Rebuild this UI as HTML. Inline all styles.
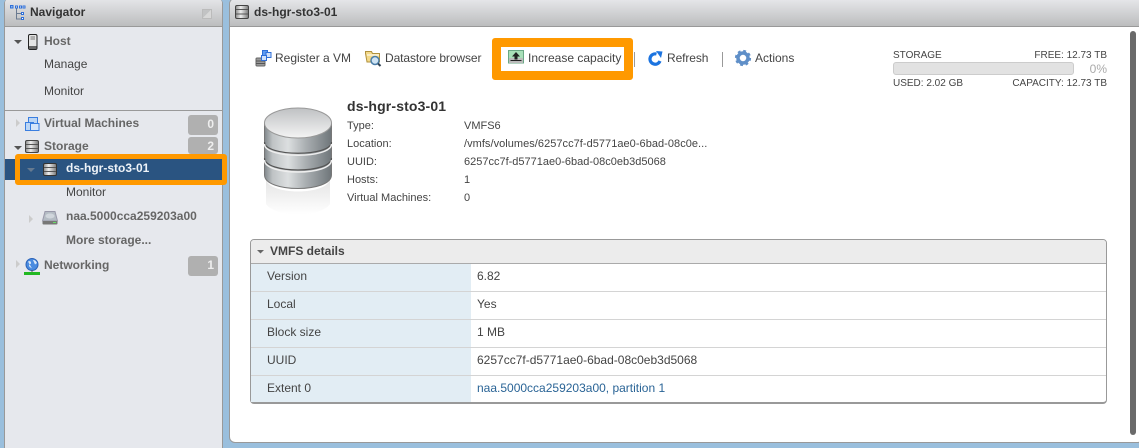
<!DOCTYPE html>
<html><head><meta charset="utf-8"><style>
html,body{margin:0;padding:0}
body{width:1139px;height:444px;overflow:hidden;background:#9abfdd;font:12px "Liberation Sans",sans-serif;color:#444;position:relative}
.a{position:absolute;white-space:nowrap}
svg{position:absolute;overflow:visible}
#left{position:absolute;left:4px;top:-2px;width:219px;height:450px;background:#e6e8ed;border-left:1px solid #999;border-right:1px solid #999;border-radius:6px 6px 0 0;box-sizing:border-box}
.hd{position:absolute;top:0;height:29px;background:linear-gradient(#e6e7ea,#bcbdbe);border-bottom:1px solid #999;box-sizing:border-box}
#main{position:absolute;left:229px;top:-2px;width:915px;height:445px;background:#fff;border:1px solid #999;border-radius:6px;box-sizing:border-box}
.nb{font-weight:bold;color:#666}
.n{color:#444}
.badge{position:absolute;left:188px;width:30px;height:20px;background:#b0b0b0;border-radius:3px;color:#eee;font-weight:bold;text-align:right;box-sizing:border-box;padding:2px 4px 0 0;line-height:15px}
.lab{font-size:11px;color:#444}
.st{font-size:10px;color:#444}
.row{position:absolute;left:251px;width:855px;height:28px;border-bottom:1px solid #d4d4d4;box-sizing:border-box}
.row .k{position:absolute;left:0;top:0;width:220px;height:27px;background:#e2edf4;padding:5px 0 0 16px;box-sizing:border-box;line-height:14px}
.row .v{position:absolute;left:226px;top:5px;line-height:14px}
</style></head><body>
<div id="left"><div class="hd" style="left:0;width:217px;border-radius:5px 5px 0 0"></div></div>
<div id="main"><div class="hd" style="left:0;width:913px;height:28px;border-radius:5px 5px 0 0"></div></div>

<!-- navigator header -->
<svg style="left:10px;top:5px" width="16" height="16" viewBox="0 0 16 16" fill="#fff" stroke="#2f6fd8" stroke-width="1"><path d="M6.500 3v11h4.500M6.500 8.500h4.500" fill="none" stroke="#6a7a90"/><rect x=".5" y=".5" width="2.500" height="2.500" fill="#8db8f0"/><rect x="5.500" y="1" width="2" height="2"/><rect x="9.500" y="1" width="2" height="2"/><rect x="13" y="1" width="2" height="2"/><rect x="11.500" y="7.500" width="2" height="2"/><rect x="11.500" y="12.500" width="2" height="2"/></svg>
<div class="a" style="left:30px;top:5px;font-weight:bold;color:#333;line-height:15px">Navigator</div>
<div class="a" style="left:202px;top:9px;width:8px;height:8px;border:1px solid #bbb;background:linear-gradient(135deg,#c2c3c4 50%,#d8d8d8 50%)"></div>

<!-- host -->
<svg style="left:14px;top:40px" width="9" height="5"><path d="M0 0H8L4 4Z" fill="#555"/></svg>
<svg style="left:28px;top:34px" width="10" height="16"><rect x=".5" y=".5" width="8.500" height="15" rx="1.500" fill="#e4e4e4" stroke="#222"/><path d="M2.500 3h4.500M2.500 5h4.500" stroke="#777"/><rect x="1" y="12" width="7.500" height="3" fill="#666"/></svg>
<div class="a nb" style="left:44px;top:34px;line-height:15px">Host</div>
<div class="a n" style="left:44px;top:57px;line-height:15px">Manage</div>
<div class="a n" style="left:44px;top:84px;line-height:15px">Monitor</div>
<div class="a" style="left:5px;top:110px;width:218px;height:1px;background:#999"></div>

<!-- VMs -->
<svg style="left:16px;top:119px" width="5" height="9"><path d="M0 0L4 4L0 8Z" fill="#ccc"/></svg>
<svg style="left:25px;top:117px" width="15" height="15"><rect x="3.500" y=".5" width="9" height="8" fill="#bcd6f5" stroke="#3a7ee0"/><rect x=".5" y="5.500" width="8" height="8" fill="#bcd6f5" stroke="#3a7ee0"/><rect x="5.500" y="6.500" width="8.500" height="7" fill="#d6e6fa" stroke="#3a7ee0"/></svg>
<div class="a nb" style="left:44px;top:116px;line-height:15px">Virtual Machines</div>
<div class="badge" style="top:115px">0</div>

<!-- storage -->
<svg style="left:14px;top:146px" width="9" height="5"><path d="M0 0H8L4 4Z" fill="#555"/></svg>
<svg style="left:25px;top:140px" width="14" height="13"><defs><linearGradient id="g" x1="0" x2="1" y1="0" y2="0"><stop offset="0" stop-color="#888"/><stop offset=".4" stop-color="#eee"/><stop offset="1" stop-color="#777"/></linearGradient></defs><rect x=".5" y=".5" width="13" height="12" rx="1.500" fill="url(#g)" stroke="#444"/><path d="M1 4.500H13M1 8.500H13" stroke="#555"/></svg>
<div class="a nb" style="left:44px;top:139px;line-height:15px">Storage</div>
<div class="badge" style="top:137px;height:17px">2</div>

<!-- selected -->
<div class="a" style="left:5px;top:159px;width:218px;height:21px;background:#2a5481"></div>
<div class="a" style="left:15px;top:154px;width:212px;height:31px;border:5px solid #ff9900;border-radius:3px;box-sizing:border-box"></div>
<svg style="left:27px;top:168px" width="9" height="5"><path d="M0 0H8L4 4Z" fill="#667a90"/></svg>
<svg style="left:43px;top:163px" width="14" height="13"><rect x=".5" y=".5" width="13" height="12" rx="1.500" fill="url(#g)" stroke="#333"/><path d="M1 4.500H13M1 8.500H13" stroke="#555"/></svg>
<div class="a" style="left:66px;top:161px;font-weight:bold;color:#eef3f8;line-height:15px">ds-hgr-sto3-01</div>
<div class="a n" style="left:66px;top:185px;line-height:15px">Monitor</div>
<svg style="left:29px;top:215px" width="5" height="9"><path d="M0 0L4 4L0 8Z" fill="#ccc"/></svg>
<svg style="left:42px;top:211px" width="16" height="14"><path d="M3 .5H13L15.500 10H.5Z" fill="#b4bcc4" stroke="#99a"/><ellipse cx="8" cy="5" rx="4.500" ry="2.500" fill="#d0d6dc"/><rect x=".5" y="10" width="15" height="3.500" rx="1" fill="#777"/><path d="M11 11.500h3" stroke="#6d6"/></svg>
<div class="a nb" style="left:66px;top:209px;line-height:15px">naa.5000cca259203a00</div>
<div class="a nb" style="left:66px;top:233px;line-height:15px">More storage...</div>

<!-- networking -->
<svg style="left:16px;top:260px" width="5" height="9"><path d="M0 0L4 4L0 8Z" fill="#ccc"/></svg>
<svg style="left:24px;top:258px" width="16" height="17"><circle cx="8" cy="6.500" r="6" fill="#4a8be0" stroke="#2a62b8"/><path d="M4 3.500c2-1 3 0 3 1.500s-2 1-2 2.500 2 2 3 3M9 2c2 0 3 1 4 3l-2 1.500z" fill="#dce9f8"/><path d="M8 12v2" stroke="#555"/><rect x="0" y="14" width="16" height="3" fill="#22b822"/></svg>
<div class="a nb" style="left:44px;top:258px;line-height:15px">Networking</div>
<div class="badge" style="top:256px">1</div>

<!-- main header -->
<svg style="left:235px;top:5px" width="14" height="14"><rect x=".5" y=".5" width="13" height="13" rx="1.500" fill="url(#g)" stroke="#444"/><path d="M1 4.500H13M1 9H13" stroke="#555"/></svg>
<div class="a" style="left:254px;top:5px;font-weight:bold;color:#333;line-height:15px">ds-hgr-sto3-01</div>

<!-- toolbar -->
<svg style="left:255px;top:49px" width="17" height="18"><rect x="1" y="9" width="9" height="8" rx="1" fill="#999" stroke="#666"/><path d="M1 12H10M1 14.500H10" stroke="#555"/><rect x="7.500" y="1.500" width="5" height="5" fill="#5d9af0" stroke="#2f6fd8"/><rect x="11" y="3.500" width="5" height="5" fill="#cfe0fa" stroke="#2f6fd8"/><rect x="6.500" y="6.500" width="5" height="5" fill="#cfe0fa" stroke="#2f6fd8"/></svg>
<div class="a" style="left:275px;top:51px;line-height:15px">Register a VM</div>
<svg style="left:365px;top:50px" width="17" height="18"><path d="M.5 3.500V1.500h6l1 2H14.500V12H2Z" fill="#f3d98a" stroke="#b0913c"/><path d="M2 5H14" stroke="#fff"/><circle cx="10" cy="10.500" r="4" fill="#cfe4f4" stroke="#4a7da8" stroke-width="1.500"/><path d="M13 13.500L15.500 16" stroke="#345" stroke-width="2"/></svg>
<div class="a" style="left:385px;top:51px;line-height:15px;letter-spacing:-.1px">Datastore browser</div>
<div class="a" style="left:492px;top:38px;width:141px;height:42px;border:9px solid #ff9900;border-radius:3px;box-sizing:border-box"></div>
<svg style="left:508px;top:50px" width="16" height="14"><rect x=".5" y=".5" width="15" height="12.500" fill="#a8dfb8" stroke="#6aa884"/><rect x="1" y="8" width="14" height="5" fill="#bbb"/><path d="M8 2L12 6.500H9.500V9.500H6.500V6.500H4Z" fill="#222"/><path d="M2.500 10.500H13.500" stroke="#222"/></svg>
<div class="a" style="left:528px;top:51px;line-height:15px">Increase capacity</div>
<div class="a" style="left:634px;top:52px;width:1px;height:15px;background:#999"></div>
<svg style="left:648px;top:51px" width="15" height="15"><path d="M12 10A5.200 5.200 0 1 1 8.500 3" fill="none" stroke="#1c74e0" stroke-width="3.200"/><path d="M8 0L14.500 0.500L13 7Z" fill="#1c74e0"/></svg>
<div class="a" style="left:667px;top:51px;line-height:15px;letter-spacing:-.1px">Refresh</div>
<div class="a" style="left:722px;top:52px;width:1px;height:15px;background:#999"></div>
<svg style="left:735px;top:50px" width="16" height="16"><circle cx="8" cy="8" r="5" fill="none" stroke="#5f8fc8" stroke-width="3.500"/><circle cx="8" cy="8" r="7" fill="none" stroke="#5f8fc8" stroke-width="2.200" stroke-dasharray="2.800 2.700"/></svg>
<div class="a" style="left:755px;top:51px;line-height:15px">Actions</div>

<!-- storage gauge -->
<div class="a st" style="left:893px;top:49px;line-height:13px">STORAGE</div>
<div class="a st" style="right:32px;top:49px;line-height:13px">FREE: 12.73 TB</div>
<div class="a" style="left:893px;top:62px;width:181px;height:13px;background:#e2e2e2;border:1px solid #ccc;border-radius:3px;box-sizing:border-box"></div>
<div class="a" style="right:32px;top:62px;color:#aaa;line-height:14px">0%</div>
<div class="a st" style="left:893px;top:77px;line-height:13px">USED: 2.02 GB</div>
<div class="a st" style="right:32px;top:77px;line-height:13px">CAPACITY: 12.73 TB</div>

<!-- scrollbar -->
<div class="a" style="left:1130px;top:31px;width:6px;height:404px;background:#6a6a6a;border-radius:3px"></div>

<!-- big datastore icon -->
<svg style="left:264px;top:106px" width="68" height="112" viewBox="0 0 68 112">
<defs>
<linearGradient id="b" x1="0" x2="1" y1="0" y2="0"><stop offset="0" stop-color="#80878b"/><stop offset=".12" stop-color="#bfc3c5"/><stop offset=".35" stop-color="#dcdfe0"/><stop offset=".62" stop-color="#a9aeb1"/><stop offset="1" stop-color="#6f767a"/></linearGradient>
<linearGradient id="t" x1="0" x2="0" y1="0" y2="1"><stop offset="0" stop-color="#bfc1c3"/><stop offset="1" stop-color="#f4f4f4"/></linearGradient>
<linearGradient id="r" x1="0" x2="0" y1="0" y2="1"><stop offset="0" stop-color="#dcdcdc"/><stop offset="1" stop-color="#fff"/></linearGradient>
</defs>
<path d="M2 72C2 90 66 90 66 72V98C56 112 12 112 2 98Z" fill="url(#r)" opacity=".8"/>
<path d="M.5 17V69C.5 87 67.500 87 67.500 69V17Z" fill="url(#b)" stroke="#777"/>
<path d="M.5 36C.5 51 67.500 51 67.500 36" fill="none" stroke="#555" stroke-width="1.200"/>
<path d="M.5 38C.5 53 67.500 53 67.500 38" fill="none" stroke="#eee" stroke-width="1.500"/>
<path d="M.5 52C.5 68 67.500 68 67.500 52" fill="none" stroke="#555" stroke-width="1.200"/>
<path d="M.5 54C.5 70 67.500 70 67.500 54" fill="none" stroke="#eee" stroke-width="1.500"/>
<ellipse cx="34" cy="17" rx="33.500" ry="15" fill="url(#t)" stroke="#999"/>
</svg>

<!-- info -->
<div class="a" style="left:347px;top:98px;font-size:14px;font-weight:bold;color:#333;line-height:16px;letter-spacing:.14px">ds-hgr-sto3-01</div>
<div class="a lab" style="left:347px;top:119px;line-height:14px">Type:</div>
<div class="a lab" style="left:464px;top:119px;line-height:14px">VMFS6</div>
<div class="a lab" style="left:347px;top:137px;line-height:14px">Location:</div>
<div class="a lab" style="left:464px;top:137px;line-height:14px;letter-spacing:.04px">/vmfs/volumes/6257cc7f-d5771ae0-6bad-08c0e...</div>
<div class="a lab" style="left:347px;top:155px;line-height:14px">UUID:</div>
<div class="a lab" style="left:464px;top:155px;line-height:14px">6257cc7f-d5771ae0-6bad-08c0eb3d5068</div>
<div class="a lab" style="left:347px;top:173px;line-height:14px">Hosts:</div>
<div class="a lab" style="left:464px;top:173px;line-height:14px">1</div>
<div class="a lab" style="left:347px;top:191px;line-height:14px">Virtual Machines:</div>
<div class="a lab" style="left:464px;top:191px;line-height:14px">0</div>

<!-- VMFS -->
<div class="a" style="left:250px;top:239px;width:857px;height:165px;border:1px solid #999;border-bottom:2px solid #999;border-radius:4px;box-sizing:border-box"></div>
<div class="a" style="left:251px;top:240px;width:855px;height:24px;background:#ececec;border-bottom:1px solid #aaa;border-radius:3px 3px 0 0;box-sizing:border-box"></div>
<svg style="left:257px;top:250px" width="8" height="4"><path d="M0 0H7L3.500 3.500Z" fill="#666"/></svg>
<div class="a" style="left:270px;top:244px;font-weight:bold;color:#444;line-height:15px">VMFS details</div>
<div class="row" style="top:264px"><div class="k">Version</div><div class="v">6.82</div></div>
<div class="row" style="top:292px"><div class="k">Local</div><div class="v">Yes</div></div>
<div class="row" style="top:320px"><div class="k">Block size</div><div class="v">1 MB</div></div>
<div class="row" style="top:348px"><div class="k">UUID</div><div class="v">6257cc7f-d5771ae0-6bad-08c0eb3d5068</div></div>
<div class="row" style="top:376px;height:26px;border-bottom:0"><div class="k" style="height:26px">Extent 0</div><div class="v" style="color:#2a6496">naa.5000cca259203a00, partition 1</div></div>
</body></html>
